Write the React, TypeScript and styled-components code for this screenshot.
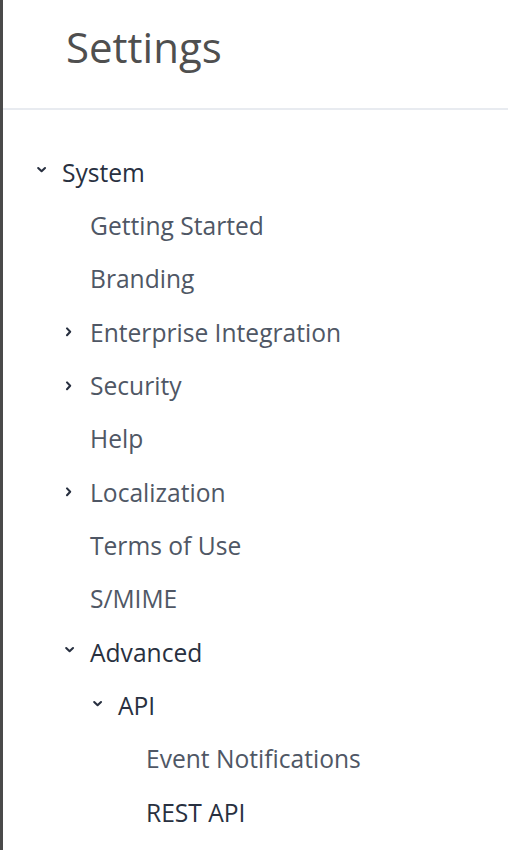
import React from "react";
import styled, { createGlobalStyle } from "styled-components";

const Global = createGlobalStyle`
  html, body { margin: 0; padding: 0; background: #ffffff; }
  body { font-family: "Open Sans", "Noto Sans", sans-serif; }
`;

const Panel = styled.div`
  width: 508px;
  height: 850px;
  box-sizing: border-box;
  border-left: 3px solid #4a4a4a;
  background: #fff;
  overflow: hidden;
`;

const Header = styled.header`
  height: 110px;
  box-sizing: border-box;
  padding: 18px 0 0 63px;
  border-bottom: 2px solid #e8ebf0;
`;

const Title = styled.h1`
  margin: 0;
  font-size: 42px;
  font-weight: 400;
  line-height: 57px;
  color: #4f4f4f;
`;

const Menu = styled.nav`
  padding-top: 35.6px;
  display: flex;
  flex-direction: column;
`;

const Row = styled.div<{ $level: number; $dark?: boolean }>`
  height: 53.33px;
  display: flex;
  align-items: center;
  padding-left: ${(p) => 59 + p.$level * 28 - 26}px;
  font-size: 24.6px;
  line-height: 53.33px;
  color: ${(p) => (p.$dark ? "#283040" : "#4f5765")};
  white-space: nowrap;
`;

const ChevronSlot = styled.span`
  width: 26px;
  flex: 0 0 26px;
  display: flex;
  align-items: center;
`;

const Chevron = ({ dir }: { dir: "down" | "right" }) => (
  <svg width="12" height="12" viewBox="0 0 12 12" style={{ marginTop: dir === "down" ? -4 : 0 }}>
    {dir === "down" ? (
      <polyline points="2.2,4 5.6,7.2 9,4" fill="none" stroke="#283040" strokeWidth="2.1" strokeLinecap="round" strokeLinejoin="round" />
    ) : (
      <polyline points="3,2.4 6.2,5.8 3,9.2" fill="none" stroke="#283040" strokeWidth="2.1" strokeLinecap="round" strokeLinejoin="round" />
    )}
  </svg>
);

type Item = { label: string; level: number; chevron?: "down" | "right"; dark?: boolean };

const items: Item[] = [
  { label: "System", level: 0, chevron: "down", dark: true },
  { label: "Getting Started", level: 1 },
  { label: "Branding", level: 1 },
  { label: "Enterprise Integration", level: 1, chevron: "right" },
  { label: "Security", level: 1, chevron: "right" },
  { label: "Help", level: 1 },
  { label: "Localization", level: 1, chevron: "right" },
  { label: "Terms of Use", level: 1 },
  { label: "S/MIME", level: 1 },
  { label: "Advanced", level: 1, chevron: "down", dark: true },
  { label: "API", level: 2, chevron: "down", dark: true },
  { label: "Event Notifications", level: 3 },
  { label: "REST API", level: 3, dark: true },
];

export default function App() {
  return (
    <>
      <Global />
      <Panel>
        <Header>
          <Title>Settings</Title>
        </Header>
        <Menu>
          {items.map((it) => (
            <Row key={it.label} $level={it.level} $dark={it.dark}>
              <ChevronSlot>{it.chevron && <Chevron dir={it.chevron} />}</ChevronSlot>
              <span>{it.label}</span>
            </Row>
          ))}
        </Menu>
      </Panel>
    </>
  );
}
